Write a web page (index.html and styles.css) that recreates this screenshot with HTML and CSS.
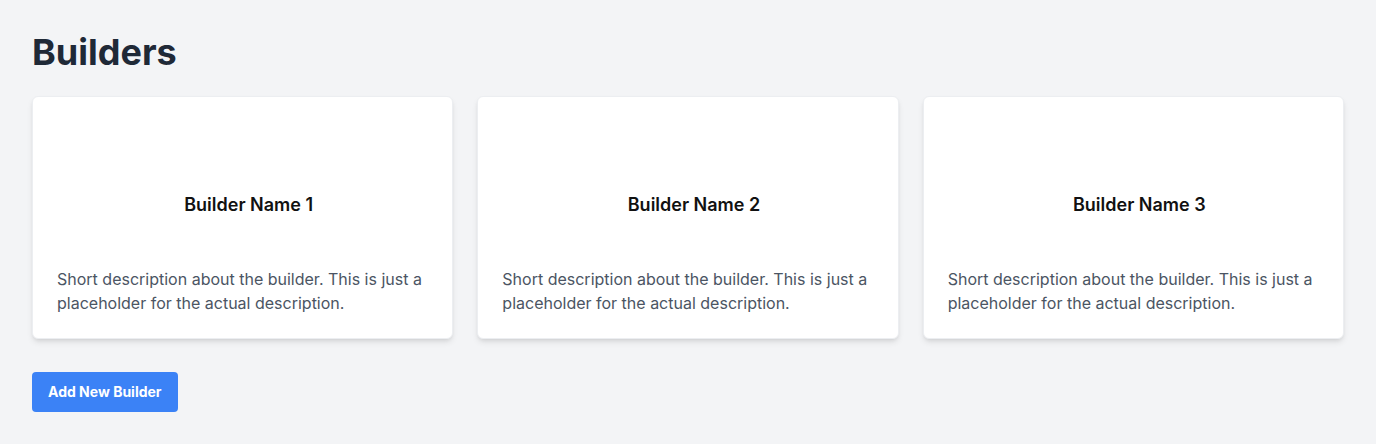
FILE: index.html
```html
<!DOCTYPE html>
<html lang="en">
<head>
<meta charset="utf-8">
<title>Builders</title>
<link rel="stylesheet" href="styles.css">
</head>
<body>
<main class="page">
  <h1 class="title">Builders</h1>
  <div class="grid">
    <div class="card">
      <h2 class="card-name">Builder Name 1</h2>
      <p class="card-desc">Short description about the builder. This is just a placeholder for the actual description.</p>
    </div>
    <div class="card">
      <h2 class="card-name">Builder Name 2</h2>
      <p class="card-desc">Short description about the builder. This is just a placeholder for the actual description.</p>
    </div>
    <div class="card">
      <h2 class="card-name">Builder Name 3</h2>
      <p class="card-desc">Short description about the builder. This is just a placeholder for the actual description.</p>
    </div>
  </div>
  <button class="btn">Add New Builder</button>
</main>
</body>
</html>
```
FILE: styles.css
```css
* { box-sizing: border-box; }
html, body {
  margin: 0;
  background: #f3f4f6;
  font-family: Inter, "Noto Sans", sans-serif;
}
.page {
  padding: 32px;
}
.title {
  margin: 0 0 24px;
  font-size: 36px;
  line-height: 40px;
  font-weight: 700;
  color: #1f2937;
}
.grid {
  display: grid;
  grid-template-columns: repeat(3, 1fr);
  gap: 24px;
}
.card {
  background: #fff;
  border-radius: 6px;
  padding: 24px;
  box-shadow: 0 4px 6px -1px rgba(0,0,0,0.1), 0 2px 4px -2px rgba(0,0,0,0.1);
  border: 1px solid #eceef1;
  height: 243px;
}
.card-name {
  margin: 0;
  padding: 70px 0 48px 12px;
  text-align: center;
  font-size: 18px;
  line-height: 28px;
  font-weight: 600;
  color: #111;
}
.card-desc {
  margin: 0;
  font-size: 16px;
  line-height: 24px;
  color: #4b5563;
}
.btn {
  margin-top: 33px;
  background: #3b82f6;
  color: #fff;
  border: none;
  border-radius: 4px;
  padding: 10px 16px;
  font-family: Inter, "Noto Sans", sans-serif;
  font-size: 14px;
  line-height: 20px;
  font-weight: 700;
  cursor: pointer;
}
```
